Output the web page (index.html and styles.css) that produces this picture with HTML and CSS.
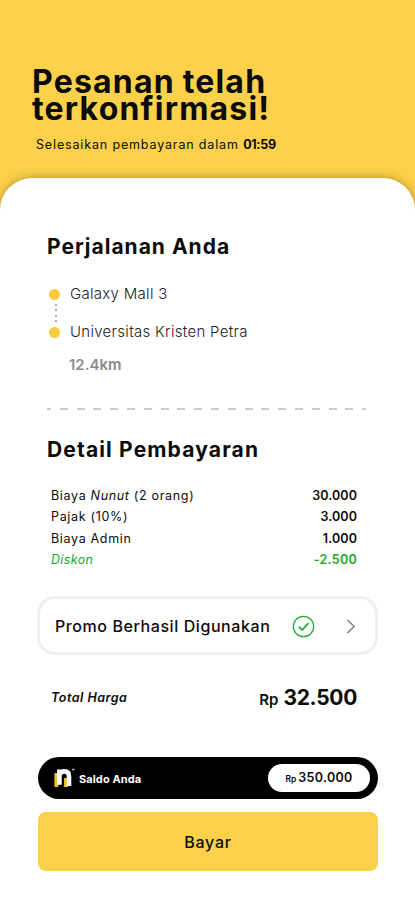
FILE: index.html
```html
<!DOCTYPE html>
<html lang="id">
<head>
    <meta charset="UTF-8">
    <meta name="viewport" content="width=device-width, initial-scale=1.0">
    <title>Pesanan telah terkonfirmasi</title>
    <link rel="stylesheet" href="styles.css">
</head>
<body>
    <header class="header">
        <h1>Pesanan telah<br>terkonfirmasi!</h1>
        <p>Selesaikan pembayaran dalam <strong>01:59</strong></p>
    </header>

    <main class="sheet">
        <section class="trip">
            <h2>Perjalanan Anda</h2>
            <div class="route">
                <div class="stop"><i class="dot"></i><span>Galaxy Mall 3</span></div>
                <div class="connector"></div>
                <div class="stop"><i class="dot"></i><span>Universitas Kristen Petra</span></div>
            </div>
            <div class="distance">12.4km</div>
        </section>

        <div class="divider"></div>

        <section class="payment">
            <h2>Detail Pembayaran</h2>
            <div class="row"><span>Biaya <em>Nunut</em> (2 orang)</span><b>30.000</b></div>
            <div class="row"><span>Pajak (10%)</span><b>3.000</b></div>
            <div class="row"><span>Biaya Admin</span><b>1.000</b></div>
            <div class="row discount"><em>Diskon</em><b>-2.500</b></div>
        </section>

        <div class="promo">
            <span class="promo-text">Promo Berhasil Digunakan</span>
            <svg class="check" width="23" height="23" viewBox="0 0 23 23" fill="none" stroke="#22ab35">
                <circle cx="11.5" cy="11.5" r="10.2" stroke-width="1.2"/>
                <path d="M6.8 11.6 L10.2 15 L16.4 8.2" stroke-width="1.8"/>
            </svg>
            <svg class="chevron" width="10" height="15" viewBox="0 0 10 15" fill="none" stroke="#777" stroke-width="1.3">
                <path d="M1.3 1 L8.3 7.5 L1.3 14"/>
            </svg>
        </div>

        <div class="total">
            <em>Total Harga</em>
            <span class="amount"><small>Rp</small><b>32.500</b></span>
        </div>

        <div class="balance">
            <svg class="logo" width="21" height="20" viewBox="0 0 21 20" fill="none">
                <path d="M2.4 19 V5 M11.9 19 V10" stroke="#eebd2c" stroke-width="4"/>
                <path d="M5.4 16.8 V1.5 M5.8 6.5 Q7 3.4 10.3 3.4 Q15 3.4 15 8.5 V18" stroke="#fff" stroke-width="4.6"/>
                <path d="M18.3 1.5 H20.5" stroke="#ccc" stroke-width="1.5"/>
            </svg>
            <span class="balance-label">Saldo Anda</span>
            <span class="balance-value"><small>Rp</small><b>350.000</b></span>
        </div>

        <button class="pay">Bayar</button>
    </main>
</body>
</html>
```
FILE: styles.css
```css
* {
    box-sizing: border-box;
}
body {
    margin: 0;
    height: 900px;
    background: #fbd04b;
    font-family: Inter, "Open Sans", sans-serif;
    color: #0b0b0b;
    white-space: nowrap;
    overflow: hidden;
}
h1, h2, p {
    margin: 0;
}
.header {
    height: 178px;
    padding: 68px 32px 0;
}
.header h1 {
    font-size: 32px;
    font-weight: 700;
    line-height: 27px;
    letter-spacing: 1.2px;
    word-spacing: -1px;
}
.header p {
    margin: 14px 0 0 4px;
    font-size: 12.5px;
    line-height: 17px;
    letter-spacing: 0.85px;
}
.header strong {
    letter-spacing: -0.3px;
}
.sheet {
    height: 722px;
    padding: 56px 37px 0;
    background: #fff;
    border-radius: 32px 32px 0 0;
    box-shadow: 0 0 8px rgba(100, 75, 0, 0.5);
}
.trip, .payment {
    padding: 0 21px 0 10px;
}
h2 {
    font-size: 21px;
    font-weight: 700;
    line-height: 26px;
    letter-spacing: 1px;
}
.route {
    padding: 24px 0 0 2px;
}
.stop {
    display: flex;
    align-items: center;
    gap: 10px;
    height: 20px;
    font-size: 15px;
    font-weight: 300;
    letter-spacing: 0.3px;
    color: #222;
}
.stop span {
    margin-top: -1px;
}
.dot {
    width: 11px;
    height: 11px;
    border-radius: 50%;
    background: #fbcb3c;
}
.connector {
    width: 2px;
    height: 18px;
    margin-left: 6px;
    background: repeating-linear-gradient(#b0b0b0 0 2px, transparent 2px 5.3px);
}
.distance {
    margin: 13px 0 0 22px;
    font-size: 15px;
    font-weight: 600;
    line-height: 20px;
    color: #8b8b8b;
}
.divider {
    height: 2px;
    margin: 33px 12px 27px 10px;
    background: repeating-linear-gradient(90deg, #ccc 0 4px, transparent 4px 12.8px, #ccc 12.8px 16.8px);
}
.payment h2 {
    margin-bottom: 22px;
    letter-spacing: 1.15px;
}
.row {
    display: flex;
    justify-content: space-between;
    align-items: center;
    height: 21.3px;
    padding-left: 4px;
    font-size: 12.5px;
    letter-spacing: 0.67px;
}
.row b {
    font-weight: 600;
    letter-spacing: 0.1px;
}
.discount {
    color: #18a82b;
}
.discount em {
    letter-spacing: 0.35px;
}
.discount b {
    letter-spacing: 0.3px;
}
.promo {
    display: flex;
    align-items: center;
    height: 59px;
    width: 341px;
    margin-top: 26px;
    padding: 1px 19px 0 15px;
    border: 3px solid #efefef;
    border-radius: 18px;
}
.promo-text {
    width: 236.5px;
    font-size: 16px;
    font-weight: 500;
    letter-spacing: 0.58px;
}
.check {
    margin-right: 31px;
}
.total {
    display: flex;
    align-items: center;
    justify-content: space-between;
    height: 30px;
    margin-top: 27px;
    padding: 0 21px 0 14px;
}
.total em {
    font-size: 12.5px;
    font-weight: 600;
    letter-spacing: 0.5px;
}
.amount small {
    margin-right: 5px;
    font-size: 15px;
    font-weight: 600;
}
.amount b {
    font-size: 21px;
    font-weight: 700;
    letter-spacing: -0.3px;
}
.balance {
    display: flex;
    align-items: center;
    height: 42px;
    width: 340px;
    margin-top: 45px;
    margin-left: 1px;
    padding: 0 8px 0 16px;
    border-radius: 21px;
    background: #000;
    color: #fff;
}
.balance-label {
    margin-left: 4px;
    padding-top: 2px;
    font-size: 11px;
    font-weight: 700;
    letter-spacing: 0.1px;
}
.balance-value {
    display: flex;
    align-items: baseline;
    justify-content: center;
    gap: 2px;
    width: 102px;
    height: 28px;
    margin-left: auto;
    border-radius: 14px;
    background: #fff;
    color: #0b0b0b;
    line-height: 28px;
}
.balance-value small {
    font-size: 8.5px;
    font-weight: 600;
}
.balance-value b {
    font-size: 12.5px;
    font-weight: 600;
    letter-spacing: 0.3px;
}
.pay {
    display: block;
    width: 340px;
    height: 59px;
    margin: 13px 0 0 1px;
    padding: 0;
    border: 0;
    border-radius: 8px;
    background: #fbd04b;
    color: #0b0b0b;
    font-family: inherit;
    font-size: 16px;
    font-weight: 500;
    letter-spacing: 0.8px;
}
```
